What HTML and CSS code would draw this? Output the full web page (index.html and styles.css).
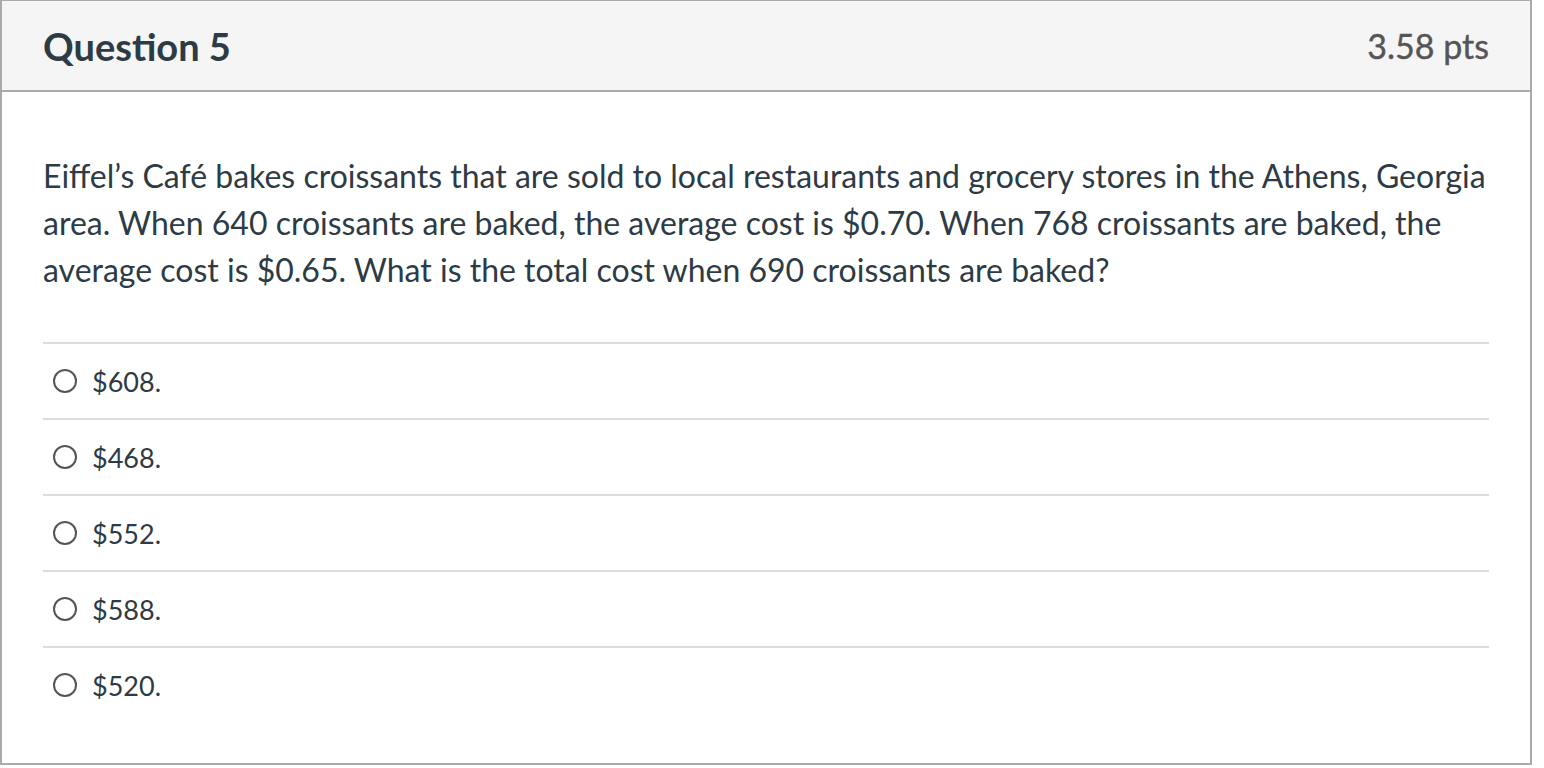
FILE: index.html
```html
<!DOCTYPE html>
<html>
<head>
<meta charset="utf-8">
<link rel="stylesheet" href="styles.css">
</head>
<body>
<div class="question">
  <div class="header">
    <div class="title">Question 5</div>
    <div class="pts">3.58 pts</div>
  </div>
  <div class="content">
    <p class="text">Eiffel’s Café bakes croissants that are sold to local restaurants and grocery stores in the Athens, Georgia area. When 640 croissants are baked, the average cost is $0.70. When 768 croissants are baked, the average cost is $0.65. What is the total cost when 690 croissants are baked?</p>
    <div class="answers">
      <div class="answer"><span class="radio"></span><span class="label">$608.</span></div>
      <div class="answer"><span class="radio"></span><span class="label">$468.</span></div>
      <div class="answer"><span class="radio"></span><span class="label">$552.</span></div>
      <div class="answer"><span class="radio"></span><span class="label">$588.</span></div>
      <div class="answer"><span class="radio"></span><span class="label">$520.</span></div>
    </div>
  </div>
</div>
</body>
</html>
```

FILE: styles.css
```css
html, body {
  margin: 0;
  padding: 0;
  background: #fff;
}
body {
  font-family: Lato, "Open Sans", sans-serif;
  color: #2d3b45;
}
.question {
  width: 1532px;
  height: 765px;
  box-sizing: border-box;
  border: 2px solid #aaaaaa;
  border-top-width: 1px;
  display: flex;
  flex-direction: column;
}
.header {
  height: 89px;
  background: #f5f5f5;
  border-bottom: 2px solid #aaaaaa;
  display: flex;
  align-items: center;
  justify-content: space-between;
  padding: 0 41px;
}
.title {
  font-size: 38px;
  font-weight: 700;
  color: #2d3b45;
}
.pts {
  font-size: 34px;
  font-weight: 400;
  color: #555555;
  -webkit-text-stroke: 0.4px #555555;
}
.content {
  padding: 0 41px;
}
.text {
  margin: 60px 0 0 0;
  font-size: 32px;
  line-height: 47px;
}
.answers {
  margin-top: 49px;
}
.answer {
  height: 74px;
  border-top: 2px solid #dddddd;
  display: flex;
  align-items: center;
  gap: 15px;
  padding-left: 10px;
}
.radio {
  width: 20px;
  height: 20px;
  border: 2px solid #555;
  border-radius: 50%;
  flex: none;
}
.label {
  font-size: 27px;
}
```
